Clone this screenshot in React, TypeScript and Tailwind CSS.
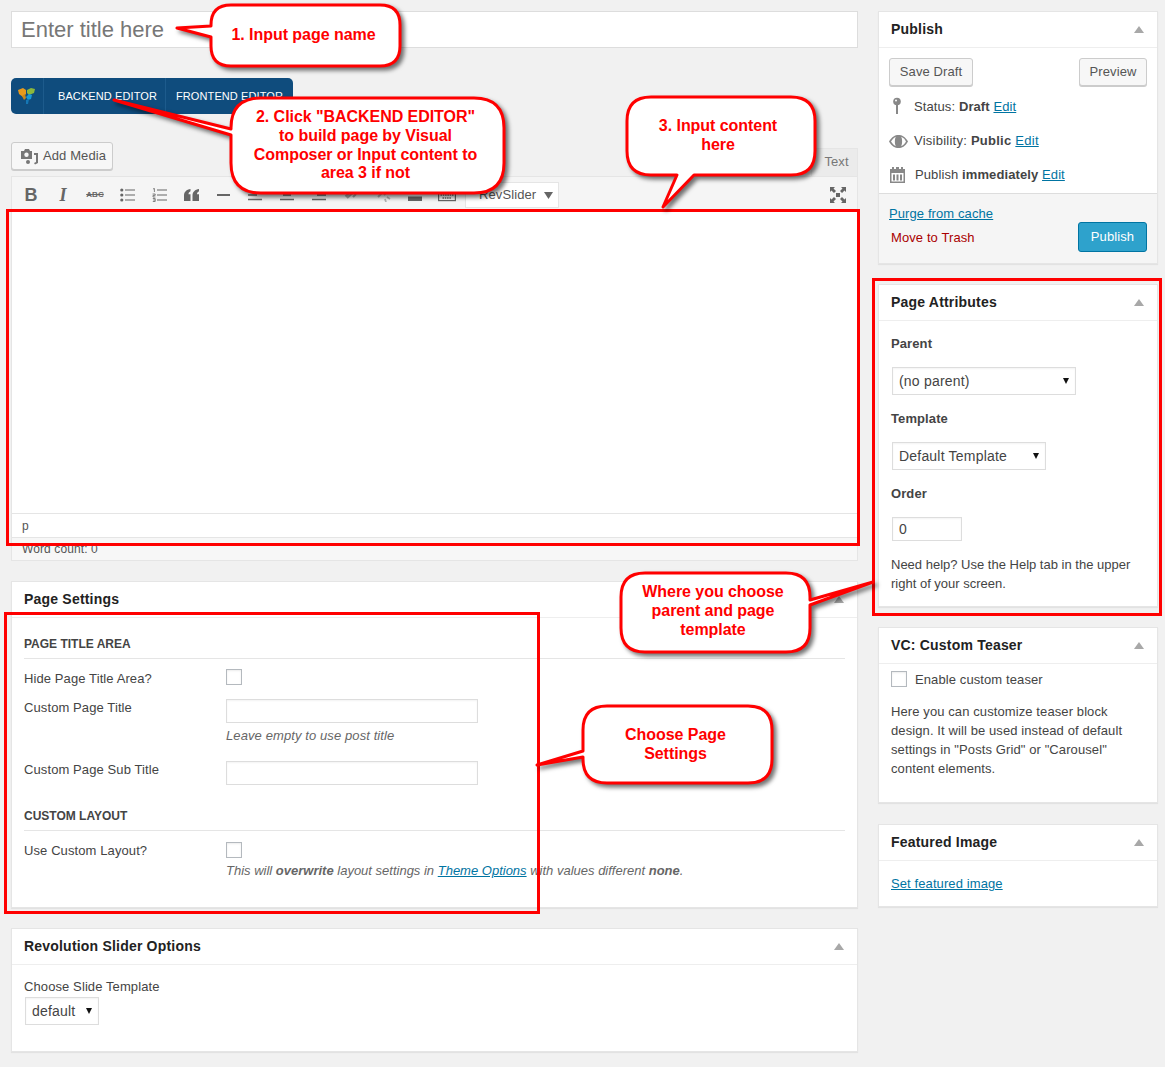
import React from "react";

type Tail = { side: "left" | "right" | "bottom"; a: number; b: number; tx: number; ty: number };

function bubblePath(x1: number, y1: number, x2: number, y2: number, r: number, t: Tail) {
  let d = `M${x1 + r} ${y1} H${x2 - r} Q${x2} ${y1} ${x2} ${y1 + r}`;
  if (t.side === "right") d += ` V${t.a} L${t.tx} ${t.ty} L${x2} ${t.b}`;
  d += ` V${y2 - r} Q${x2} ${y2} ${x2 - r} ${y2}`;
  if (t.side === "bottom") d += ` H${t.b} L${t.tx} ${t.ty} L${t.a} ${y2}`;
  d += ` H${x1 + r} Q${x1} ${y2} ${x1} ${y2 - r}`;
  if (t.side === "left") d += ` V${t.b} L${t.tx} ${t.ty} L${x1} ${t.a}`;
  d += ` V${y1 + r} Q${x1} ${y1} ${x1 + r} ${y1} Z`;
  return d;
}

const bubbles = [
  bubblePath(211, 5, 400, 66, 20, { side: "left", a: 26, b: 37, tx: 177, ty: 28 }),
  bubblePath(231, 98, 504, 193, 30, { side: "left", a: 129, b: 135, tx: 114, ty: 100 }),
  bubblePath(627, 97, 815, 175, 24, { side: "bottom", a: 677, b: 694, tx: 663, ty: 207 }),
  bubblePath(621, 573, 810, 652, 24, { side: "right", a: 600, b: 605, tx: 873, ty: 582 }),
  bubblePath(583, 706, 772, 783, 24, { side: "left", a: 751, b: 757, tx: 537, ty: 765 }),
];

const Triangle = () => (
  <svg width="10" height="7" viewBox="0 0 10 7" className="shrink-0">
    <path d="M5 0 L10 7 H0 Z" fill="#a8a8a8" />
  </svg>
);

const SelectArrow = () => (
  <svg width="6" height="6" viewBox="0 0 6 6" className="shrink-0">
    <path d="M0 0 H6 L3 6 Z" fill="#111" />
  </svg>
);

function Box({ title, className, children }: { title: string; className: string; children?: React.ReactNode }) {
  return (
    <section className={`bg-white border border-[#e5e5e5] shadow-[0_1px_1px_rgba(0,0,0,0.06)] flex flex-col ${className}`}>
      <header className="h-[36px] shrink-0 border-b border-[#eeeeee] flex items-center justify-between pl-[12px] pr-[13px]">
        <h2 className="text-[14px] font-bold text-[#222] tracking-[0.2px] -mt-[1px]">{title}</h2>
        <Triangle />
      </header>
      {children}
    </section>
  );
}

function Check({ className }: { className: string }) {
  return <div className={`w-[16px] h-[16px] border border-[#b4b9be] bg-white shadow-[inset_0_1px_2px_rgba(0,0,0,0.08)] ${className}`} />;
}

function TextField({ className, children }: { className: string; children?: React.ReactNode }) {
  return (
    <div className={`border border-[#dddddd] bg-white shadow-[inset_0_1px_2px_rgba(0,0,0,0.05)] flex items-center text-[14px] tracking-[0.2px] text-[#444] ${className}`}>
      {children}
    </div>
  );
}

function SectionHead({ children, className }: { children: string; className: string }) {
  return (
    <div className={`h-[25px] border-b border-[#e5e5e5] text-[12px] leading-[20px] font-bold text-[#444] ${className}`}>{children}</div>
  );
}

const ic = "#666";

function ToolIcon({ children }: { children: React.ReactNode }) {
  return <div className="w-[32px] h-[24px] flex items-center justify-center shrink-0">{children}</div>;
}

function Toolbar() {
  const alignLines = (variant: number) => (
    <svg width="16" height="14" viewBox="0 0 16 14">
      {variant === 0 && <path d="M1 2.5h14M1 7h9M1 11.5h14" stroke={ic} strokeWidth="1.6" />}
      {variant === 1 && <path d="M1 2.5h14M4 7h8M1 11.5h14" stroke={ic} strokeWidth="1.6" />}
      {variant === 2 && <path d="M1 2.5h14M6 7h9M1 11.5h14" stroke={ic} strokeWidth="1.6" />}
    </svg>
  );
  return (
    <div className="h-[34px] shrink-0 bg-[#f5f5f5] border-b border-[#e5e5e5] flex items-center pl-[3px] pr-[11px] pt-[3px]">
      <ToolIcon><span className="text-[18px] font-bold text-[#666]">B</span></ToolIcon>
      <ToolIcon><span className="text-[18px] font-bold italic text-[#666] [font-family:'Liberation_Serif',serif]">I</span></ToolIcon>
      <ToolIcon><span className="text-[8px] font-bold text-[#666] line-through">ABC</span></ToolIcon>
      <ToolIcon>
        <svg width="15" height="14" viewBox="0 0 15 14">
          <path d="M5 2h10M5 7h10M5 12h10" stroke={ic} strokeWidth="1.2" />
          <circle cx="1.8" cy="2" r="1.6" fill={ic} />
          <circle cx="1.8" cy="7" r="1.6" fill={ic} />
          <circle cx="1.8" cy="12" r="1.6" fill={ic} />
        </svg>
      </ToolIcon>
      <ToolIcon>
        <svg width="15" height="14" viewBox="0 0 15 14">
          <path d="M5 2h10M5 7h10M5 12h10" stroke={ic} strokeWidth="1.2" />
          <path d="M1 1l1.4-.6V4M.6 6h2.6v1.4H1V9h2.400M.8 10.500h2.400v3H.8M1.200 12h2" stroke={ic} strokeWidth="0.8" fill="none" />
        </svg>
      </ToolIcon>
      <ToolIcon>
        <svg width="15" height="12" viewBox="0 0 15 12">
          <path d="M6.500 0v2.200C5 3 4.500 4 4.500 5.200H6.500V12H0V6.500C0 3 2.500.5 6.500 0zM15 0v2.200C13.500 3 13 4 13 5.200h2V12H8.500V6.500C8.500 3 11 .5 15 0z" fill={ic} />
        </svg>
      </ToolIcon>
      <ToolIcon><div className="w-[13px] h-[2px] bg-[#666]" /></ToolIcon>
      <ToolIcon>{alignLines(0)}</ToolIcon>
      <ToolIcon>{alignLines(1)}</ToolIcon>
      <ToolIcon>{alignLines(2)}</ToolIcon>
      <ToolIcon>
        <svg width="16" height="14" viewBox="0 0 16 14">
          <path d="M4 10l8-7M2.500 8.500l3-3M10 9l3-3" stroke="#aaa" strokeWidth="2.200" fill="none" />
        </svg>
      </ToolIcon>
      <ToolIcon>
        <svg width="16" height="14" viewBox="0 0 16 14">
          <path d="M3 9l4-4M9 7l3-3M12 9l3 2M10 11l1 3M2 4l2 1" stroke="#b5b5b5" strokeWidth="1.800" fill="none" />
        </svg>
      </ToolIcon>
      <ToolIcon>
        <svg width="16" height="14" viewBox="0 0 16 14">
          <path d="M1 1h14v5H1zM1 8.500h14V13H1z" fill={ic} />
        </svg>
      </ToolIcon>
      <ToolIcon>
        <svg width="18" height="14" viewBox="0 0 18 14">
          <rect x="0.600" y="1.600" width="16.800" height="11" fill="none" stroke={ic} strokeWidth="1.200" />
          <path d="M2.500 4.500h13M2.500 7h13M4.500 10h9" stroke={ic} strokeWidth="1.300" strokeDasharray="1.500 .8" />
        </svg>
      </ToolIcon>
      <div className="ml-[2px] w-[94px] h-[26px] bg-white border border-[#e5e5e5] flex items-center justify-between pl-[13px] pr-[5px] text-[13px] text-[#555]">
        <span>RevSlider</span>
        <svg width="9" height="7" viewBox="0 0 9 7"><path d="M0 0h9L4.500 7z" fill="#666" /></svg>
      </div>
      <div className="ml-auto">
        <svg width="16" height="16" viewBox="0 0 16 16">
          <path d="M0 0h5L3.500 1.500 6 4 4 6 1.500 3.500 0 5zM16 0v5l-1.500-1.500L12 6l-2-2 2.500-2.500L11 0zM0 16v-5l1.500 1.500L4 10l2 2-2.500 2.500L5 16zM16 16h-5l1.500-1.500L10 12l2-2 2.500 2.500L16 11z" fill="#666" />
          <rect x="6" y="6" width="4" height="4" fill="#666" />
        </svg>
      </div>
    </div>
  );
}

const linkCls = "text-[#0074a2] underline";
const calloutCls = "absolute flex items-center justify-center text-center text-[16px] leading-[18.700px] font-bold tracking-[-0.05px] text-[#ff0000]";

function StatusRow({ icon, children, className }: { icon: React.ReactNode; children: React.ReactNode; className: string }) {
  return (
    <div className={`flex items-center h-[18px] ${className}`}>
      <div className="w-[25px] flex justify-start shrink-0">{icon}</div>
      <div className="text-[#444] pt-[2px]">{children}</div>
    </div>
  );
}

export default function App() {
  return (
    <div className="relative w-[1165px] h-[1067px] overflow-hidden bg-[#f1f1f1] flex gap-[20px] pl-[11px] pt-[11px] text-[13px] tracking-[0.1px] text-[#444] [font-family:'Liberation_Sans',Arial,sans-serif]">
      {/* left column */}
      <main className="w-[847px] shrink-0 flex flex-col">
        <div className="h-[37px] bg-white border border-[#dddddd] flex items-center pl-[9px] text-[22px] tracking-normal text-[#777]">Enter title here</div>

        <div className="mt-[30px] w-[282px] h-[36px] rounded-[5px] bg-[#0f4c7d] flex items-center text-white text-[11px] tracking-[0.1px]">
          <div className="w-[33px] h-full border-r border-[#1d5b8c] flex items-center justify-center">
            <svg width="18" height="18" viewBox="0 0 18 18">
              <path d="M0 3l5-2 3 2v4l-3 3-4-3z" fill="#e89a1c" />
              <path d="M4 9l3-2 1 4-2 2z" fill="#c9871a" />
              <path d="M9 3l4-2 4 1-1 4-5 2-2-2z" fill="#8cb73c" />
              <path d="M8 10l3-3 3 1-1 4-3 1z" fill="#1a9ad6" />
              <path d="M8 13l3-1-1 5-2 0z" fill="#1577b5" />
            </svg>
          </div>
          <div className="w-[122px] h-full border-r border-[#1d5b8c] flex items-center pl-[14px]">BACKEND EDITOR</div>
          <div className="flex-1 flex items-center pl-[10px]">FRONTEND EDITOR</div>
        </div>

        <div className="mt-[28px] h-[34px] flex items-start justify-between">
          <div className="h-[28px] w-[102px] bg-[#f7f7f7] border border-[#cccccc] rounded-[3px] shadow-[0_1px_0_#cccccc] flex items-center pl-[8px] gap-[4px] text-[#555]">
            <svg width="19" height="17" viewBox="0 0 19 17">
              <path d="M1 3h3l1-2h4l1 2h2v8H1z" fill="#777" />
              <circle cx="6.500" cy="6.800" r="2.200" fill="#f7f7f7" />
              <path d="M14 5h4v10l-3 1.500-1-1.500 2-1V7h-2z" fill="#777" />
              <circle cx="8" cy="14" r="2" fill="#777" />
            </svg>
            <span>Add Media</span>
          </div>
          <div className="mt-[6px] h-[28px] w-[47px] bg-[#ebebeb] border border-[#e5e5e5] border-b-0 flex items-center justify-center pl-[4px] pb-[2px] text-[#777]">Text</div>
        </div>

        <div className="h-[385px] border border-[#e5e5e5] bg-[#f7f7f7] flex flex-col">
          <Toolbar />
          <div className="flex-1 bg-white" />
          <div className="h-[24px] shrink-0 bg-white border-t border-[#e5e5e5] flex items-center pl-[10px] text-[12px] text-[#555]">p</div>
          <div className="h-[23px] shrink-0 border-t border-[#e5e5e5] bg-[#f7f7f7] flex items-center pl-[10px] text-[12px] text-[#555]">Word count: 0</div>
        </div>

        <Box title="Page Settings" className="mt-[20px] h-[327px]">
          <div className="px-[12px]">
            <SectionHead className="mt-[16px] tracking-normal">PAGE TITLE AREA</SectionHead>
            <div className="mt-[10px] flex h-[18px]">
              <div className="w-[202px] leading-[20px]">Hide Page Title Area?</div>
              <Check className="" />
            </div>
            <div className="mt-[11px] flex">
              <div className="w-[202px] leading-[20px]">Custom Page Title</div>
              <div className="flex flex-col pt-[1px]">
                <TextField className="w-[252px] h-[24px]" />
                <div className="mt-[3px] h-[18px] leading-[20px] italic text-[#666]">Leave empty to use post title</div>
              </div>
            </div>
            <div className="mt-[16px] flex">
              <div className="w-[202px] leading-[20px]">Custom Page Sub Title</div>
              <div className="pt-[1px]">
                <TextField className="w-[252px] h-[24px]" />
              </div>
            </div>
            <SectionHead className="mt-[21px] tracking-normal">CUSTOM LAYOUT</SectionHead>
            <div className="mt-[10px] flex">
              <div className="w-[202px] leading-[20px]">Use Custom Layout?</div>
              <div className="flex flex-col pt-[1px]">
                <Check className="" />
                <div className="mt-[3px] h-[18px] leading-[20px] italic text-[#666] tracking-normal whitespace-nowrap">
                  This will <b>overwrite</b> layout settings in <span className={linkCls}>Theme Options</span> with values different <b>none</b>.
                </div>
              </div>
            </div>
          </div>
        </Box>

        <Box title="Revolution Slider Options" className="mt-[20px] h-[124px]">
          <div className="pl-[12px]">
            <div className="mt-[12px] h-[18px] leading-[20px]">Choose Slide Template</div>
            <TextField className="mt-[2px] ml-[1px] w-[74px] h-[28px] pl-[6px] pr-[6px] justify-between">
              <span>default</span>
              <SelectArrow />
            </TextField>
          </div>
        </Box>
      </main>

      {/* right column */}
      <aside className="w-[280px] shrink-0 flex flex-col">
        <Box title="Publish" className="h-[253px]">
          <div className="flex-1 flex flex-col">
            <div className="px-[10px] pt-[10px] flex justify-between">
              <div className="h-[28px] w-[84px] bg-[#f7f7f7] border border-[#cccccc] rounded-[3px] shadow-[0_1px_0_#cccccc] flex items-center justify-center text-[#555]">Save Draft</div>
              <div className="h-[28px] w-[68px] bg-[#f7f7f7] border border-[#cccccc] rounded-[3px] shadow-[0_1px_0_#cccccc] flex items-center justify-center text-[#555]">Preview</div>
            </div>
            <div className="px-[10px]">
              <StatusRow
                className="mt-[11px]"
                icon={
                  <svg width="14" height="18" viewBox="0 0 14 18" className="ml-[3px]">
                    <circle cx="5" cy="4.500" r="3.800" fill="#888" />
                    <circle cx="4" cy="3.500" r="1" fill="#fff" />
                    <rect x="4" y="8" width="2" height="9" fill="#888" />
                  </svg>
                }
              >
                Status: <b>Draft</b> <span className={linkCls}>Edit</span>
              </StatusRow>
              <StatusRow
                className="mt-[16px]"
                icon={
                  <svg width="19" height="13" viewBox="0 0 19 13" className="mt-[3px]">
                    <path d="M0 6.500C3 1.500 6 0 9.500 0S16 1.500 19 6.500C16 11.500 13 13 9.500 13S3 11.500 0 6.500z" fill="#888" />
                    <path d="M2 6.500C4 3.500 6 2 7 1.800 5.500 3 5.500 10 7 11.200 6 11 4 9.500 2 6.500z" fill="#fff" />
                    <path d="M12 1.800c3 1 4 3 5 4.700-1 1.700-2 3.700-5 4.700 1.500-1.500 1.500-8 0-9.400z" fill="#fff" />
                  </svg>
                }
              >
                <span className="tracking-[0.25px]">Visibility: <b>Public</b> <span className={linkCls}>Edit</span></span>
              </StatusRow>
              <StatusRow
                className="mt-[16px]"
                icon={
                  <svg width="17" height="16" viewBox="0 0 17 16" className="mt-[2px]">
                    <path d="M1 2h2V0h2v2h2V0h3v2h2V0h2v2h2v14H1zM2.500 6v8.500h12V6z" fill="#888" fillRule="evenodd" />
                    <path d="M4 7.500h2v6H4zM7.500 7.500h2v6h-2zM11 7.500h2v6h-2z" fill="#888" />
                  </svg>
                }
              >
                <span className="ml-[1px]">Publish <b>immediately</b> <span className={linkCls}>Edit</span></span>
              </StatusRow>
            </div>
            <div className="mt-[10px] flex-1 bg-[#f5f5f5] border-t border-[#dddddd] px-[10px] flex justify-between">
              <div className="pt-[11px] leading-[18px]">
                <div className="text-[#0074a2] underline">Purge from cache</div>
                <div className="mt-[6px] ml-[2px] text-[#a00]">Move to Trash</div>
              </div>
              <div className="mt-[28px] h-[30px] w-[69px] rounded-[3px] bg-[#2ea2cc] border border-[#0074a2] flex items-center justify-center text-white">Publish</div>
            </div>
          </div>
        </Box>

        <Box title="Page Attributes" className="mt-[20px] h-[323px]">
          <div className="px-[12px]">
            <div className="mt-[13px] h-[18px] leading-[20px] font-bold">Parent</div>
            <TextField className="mt-[15px] ml-[1px] w-[184px] h-[28px] pl-[6px] pr-[6px] justify-between">
              <span>(no parent)</span>
              <SelectArrow />
            </TextField>
            <div className="mt-[14px] h-[18px] leading-[20px] font-bold">Template</div>
            <TextField className="mt-[15px] ml-[1px] w-[154px] h-[28px] pl-[6px] pr-[6px] justify-between">
              <span>Default Template</span>
              <SelectArrow />
            </TextField>
            <div className="mt-[14px] h-[18px] leading-[20px] font-bold">Order</div>
            <TextField className="mt-[15px] ml-[1px] w-[70px] h-[24px] pl-[6px]">0</TextField>
            <div className="mt-[14px] leading-[19px] tracking-normal">
              Need help? Use the Help tab in the upper<br />right of your screen.
            </div>
          </div>
        </Box>

        <Box title="VC: Custom Teaser" className="mt-[20px] h-[176px]">
          <div className="px-[12px]">
            <div className="mt-[7px] flex items-center h-[16px] gap-[8px]">
              <Check className="" />
              <span className="pt-[2px]">Enable custom teaser</span>
            </div>
            <div className="mt-[15px] leading-[19px]">
              Here you can customize teaser block<br />design. It will be used instead of default<br />settings in "Posts Grid" or "Carousel"<br />content elements.
            </div>
          </div>
        </Box>

        <Box title="Featured Image" className="mt-[21px] h-[83px]">
          <div className="px-[12px] mt-[14px] leading-[18px]">
            <span className={linkCls}>Set featured image</span>
          </div>
        </Box>
      </aside>

      {/* red annotation frames */}
      <div className="absolute left-[6px] top-[209px] w-[854px] h-[337px] border-[3px] border-[#ff0000]" />
      <div className="absolute left-[4px] top-[612px] w-[536px] h-[302px] border-[3px] border-[#ff0000]" />
      <div className="absolute left-[872px] top-[278px] w-[290px] h-[338px] border-[3px] border-[#ff0000]" />

      {/* callout shapes */}
      {bubbles.map((d, i) => (
        <svg key={i} width="1165" height="1067" viewBox="0 0 1165 1067" className="absolute left-0 top-0 pointer-events-none drop-shadow-[3px_3px_2px_rgba(0,0,0,0.55)]">
          <path d={d} fill="#fff" stroke="#ff0000" strokeWidth="3" strokeLinejoin="round" />
        </svg>
      ))}

      {/* callout texts */}
      <div className={`${calloutCls} left-[209px] top-[5px] w-[189px] h-[61px]`}>1. Input page name</div>
      <div className={`${calloutCls} left-[230px] top-[98px] w-[271px] h-[95px]`}>
        <div>2. Click "BACKEND EDITOR"<br />to build page by Visual<br />Composer or Input content to<br />area 3 if not</div>
      </div>
      <div className={`${calloutCls} left-[624px] top-[98px] w-[188px] h-[76px]`}>
        <div>3. Input content<br />here</div>
      </div>
      <div className={`${calloutCls} left-[621px] top-[573px] w-[184px] h-[77px]`}>
        <div>Where you choose<br />parent and page<br />template</div>
      </div>
      <div className={`${calloutCls} left-[583px] top-[706px] w-[185px] h-[77px]`}>
        <div>Choose Page<br />Settings</div>
      </div>
    </div>
  );
}
